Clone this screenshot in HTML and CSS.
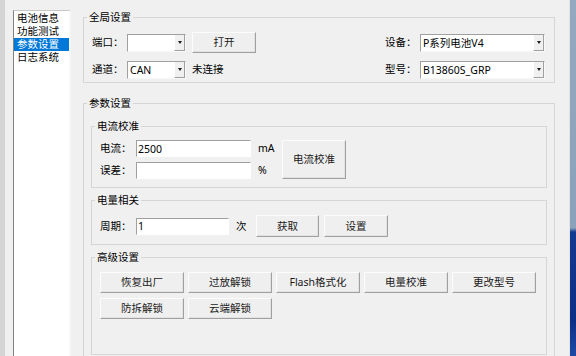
FILE: index.html
```html
<!DOCTYPE html>
<html lang="zh-CN">
<head>
  <meta charset="UTF-8">
  <meta name="viewport" content="width=device-width, initial-scale=1.0">
  <title>参数设置</title>
  <link rel="stylesheet" href="styles.css">
</head>
<body>
  <div class="frame-edge"></div>
  <div class="frame-gap"></div>

  <ul class="nav-list">
    <li>电池信息</li>
    <li>功能测试</li>
    <li class="active">参数设置</li>
    <li>日志系统</li>
  </ul>

  <main class="panel">
    <fieldset class="group">
      <legend>全局设置</legend>
      <div class="global-body">
        <div class="row">
          <span class="label">端口：</span>
          <div class="combo combo-small"><span class="combo-value"></span><span class="combo-arrow"></span></div>
          <button class="btn btn-open">打开</button>
          <span class="label label-right">设备：</span>
          <div class="combo combo-wide"><span class="combo-value">P系列电池V4</span><span class="combo-arrow"></span></div>
        </div>
        <div class="row">
          <span class="label">通道：</span>
          <div class="combo combo-small"><span class="combo-value">CAN</span><span class="combo-arrow"></span></div>
          <span class="status">未连接</span>
          <span class="label label-right">型号：</span>
          <div class="combo combo-wide"><span class="combo-value">B13860S_GRP</span><span class="combo-arrow"></span></div>
        </div>
      </div>
    </fieldset>

    <fieldset class="group group-params">
      <legend>参数设置</legend>
      <div class="params-body">

        <fieldset class="group sub">
          <legend>电流校准</legend>
          <div class="current-body">
            <span class="label">电流：</span>
            <input class="field" type="text" value="2500">
            <span class="unit">mA</span>
            <button class="btn btn-calib">电流校准</button>
            <span class="label">误差：</span>
            <input class="field" type="text" value="">
            <span class="unit">%</span>
          </div>
        </fieldset>

        <fieldset class="group sub">
          <legend>电量相关</legend>
          <div class="energy-body">
            <span class="label">周期：</span>
            <input class="field field-period" type="text" value="1">
            <span class="unit-count">次</span>
            <button class="btn btn-get">获取</button>
            <button class="btn btn-set">设置</button>
          </div>
        </fieldset>

        <fieldset class="group sub">
          <legend>高级设置</legend>
          <div class="adv-body">
            <button class="btn">恢复出厂</button>
            <button class="btn">过放解锁</button>
            <button class="btn">Flash格式化</button>
            <button class="btn">电量校准</button>
            <button class="btn">更改型号</button>
            <button class="btn">防拆解锁</button>
            <button class="btn">云端解锁</button>
          </div>
        </fieldset>

      </div>
    </fieldset>
  </main>

  <div class="desktop"></div>
</body>
</html>
```

FILE: styles.css
```css
body {
  margin: 0;
  width: 576px;
  height: 356px;
  overflow: hidden;
  display: flex;
  background: #f0f0f0;
  font-family: "Noto Sans", "Noto Sans CJK SC", sans-serif;
  font-size: 10.5px;
  line-height: 13px;
  color: #000;
}
.frame-edge {
  flex: none;
  width: 5px;
  background: #d4d4d4;
}
.frame-gap {
  flex: none;
  width: 8px;
}
.nav-list {
  flex: none;
  list-style: none;
  margin: 10px 0 0;
  padding: 1px 0 0;
  width: 55px;
  height: 360px;
  background: #fff;
  border-left: 1px solid #828282;
  border-top: 1px solid #c8c8c8;
  border-right: 2px solid #f7f7f7;
}
.nav-list li {
  height: 13px;
  padding-left: 3px;
  white-space: nowrap;
}
.nav-list .active {
  background: #0078d7;
  color: #fff;
}
.panel {
  flex: none;
  width: 472px;
  padding: 11px 14px 0 12px;
}
.group {
  margin: 0;
  padding: 0;
  min-width: 0;
  border: 1px solid #d5d5d5;
}
.group legend {
  margin-left: 3px;
  padding: 0 2px;
  line-height: 13px;
}
.group-params {
  margin-top: 14px;
}
.params-body {
  padding: 10px 7px 8px;
}
.sub + .sub {
  margin-top: 6px;
}
.global-body {
  display: flex;
  flex-direction: column;
  gap: 6px;
  padding: 8px 9px 2px 8px;
}
.row {
  display: flex;
  align-items: center;
  height: 21px;
}
.label {
  flex: none;
  width: 35px;
  white-space: nowrap;
}
.label-right {
  margin-left: auto;
}
.combo {
  flex: none;
  display: flex;
  box-sizing: border-box;
  height: 18px;
  background: #fff;
  border: 1px solid;
  border-color: #a0a0a0 #f8f8f8 #f8f8f8 #a0a0a0;
}
.combo-small {
  width: 59px;
}
.combo-wide {
  width: 125px;
}
.combo-value {
  flex: 1;
  padding-left: 2px;
  line-height: 16px;
  white-space: nowrap;
}
.combo-arrow {
  width: 9px;
  display: flex;
  align-items: center;
  justify-content: center;
  background: #f0f0f0;
  border-left: 1px solid #fff;
  border-right: 1px solid #a0a0a0;
  border-bottom: 1px solid #a0a0a0;
}
.combo-arrow::after {
  content: "";
  border-style: solid;
  border-width: 3px 2.5px 0;
  border-color: #1a1a1a transparent transparent;
}
.btn {
  font: inherit;
  color: #1a1a1a;
  background: #efefef;
  border: 1px solid;
  border-color: #fcfcfc #a0a0a0 #a0a0a0 #fcfcfc;
  box-shadow: inset -1px -1px 0 #e2e2e2;
  padding: 0;
  height: 21px;
  white-space: nowrap;
}
.btn-open {
  width: 64px;
  margin-left: 6px;
}
.status {
  margin-left: 6px;
}
.field {
  box-sizing: border-box;
  width: 100%;
  height: 17px;
  margin: 0;
  padding: 0 1px;
  font: inherit;
  background: #fff;
  border: 1px solid;
  border-color: #a0a0a0 #fff #fff #a0a0a0;
  outline: none;
}
.current-body {
  display: grid;
  grid-template-columns: 36px 115px 31px 64px;
  grid-template-rows: 17px 17px;
  row-gap: 5px;
  align-items: center;
  padding: 7px 8px 8px;
}
.current-body .label,
.energy-body .label {
  width: 36px;
}
.unit {
  padding-left: 7px;
}
.btn-calib {
  grid-column: 4;
  grid-row: 1 / span 2;
  height: 39px;
}
.energy-body {
  display: flex;
  align-items: center;
  height: 22px;
  padding: 8px 8px 7px;
}
.field-period {
  flex: none;
  width: 93px;
}
.unit-count {
  flex: none;
  box-sizing: border-box;
  width: 27px;
  padding-left: 7px;
}
.btn-get,
.btn-set {
  height: 22px;
}
.btn-get {
  width: 63px;
}
.btn-set {
  width: 64px;
  margin-left: 5px;
}
.adv-body {
  display: grid;
  grid-template-columns: repeat(5, 84px);
  column-gap: 4px;
  row-gap: 5px;
  padding: 8px 8px 35px;
}
.desktop {
  flex: none;
  width: 6px;
  border-left: 1px solid #e2e2e2;
  background: linear-gradient(to bottom, #93a9bf 0, #8aa2ba 228px, #143a8f 232px, #0d2f86 320px, #1d4aa5 356px);
}
```
